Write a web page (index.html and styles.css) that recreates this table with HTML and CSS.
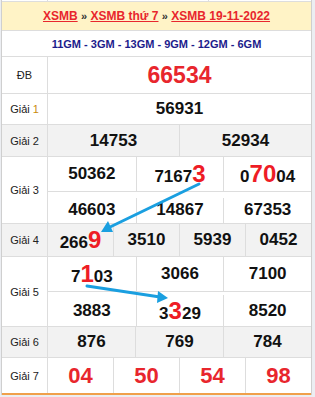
FILE: index.html
```html
<!DOCTYPE html>
<html lang="vi">
<head>
<meta charset="utf-8">
<link rel="stylesheet" href="styles.css">
</head>
<body>
<div class="page">
  <div class="prev">
    <div class="prev-a"></div><div class="prev-b"></div><div class="prev-c"></div>
  </div>
  <div class="title">
    <span><a href="#">XSMB</a> <span class="sep">»</span> <a href="#">XSMB thứ 7</a> <span class="sep">»</span> <a href="#">XSMB 19-11-2022</a></span>
  </div>
  <div class="codes">11GM - 3GM - 13GM - 9GM - 12GM - 6GM</div>

  <div class="row r-db">
    <div class="label">ĐB</div>
    <div class="vals"><div class="cell db">66534</div></div>
  </div>
  <div class="row r-g1">
    <div class="label"><span>Giải <span class="gold">1</span></span></div>
    <div class="vals"><div class="cell">56931</div></div>
  </div>
  <div class="row r-g2 grey">
    <div class="label">Giải 2</div>
    <div class="vals"><div class="cell">14753</div><div class="cell">52934</div></div>
  </div>
  <div class="row r-g3">
    <div class="label">Giải 3</div>
    <div class="vals grid3">
      <div class="cell c1">50362</div>
      <div class="cell c1"><span>7167<b class="hl">3</b></span></div>
      <div class="cell c1"><span>0<b class="hl">70</b>04</span></div>
      <div class="cell c2">46603</div><div class="cell c2">14867</div><div class="cell c2">67353</div>
    </div>
  </div>
  <div class="row r-g4 grey">
    <div class="label">Giải 4</div>
    <div class="vals"><div class="cell"><span>266<b class="hl">9</b></span></div><div class="cell">3510</div><div class="cell">5939</div><div class="cell">0452</div></div>
  </div>
  <div class="row r-g5">
    <div class="label">Giải 5</div>
    <div class="vals grid3">
      <div class="cell c1"><span>7<b class="hl">1</b>03</span></div><div class="cell c1">3066</div><div class="cell c1">7100</div>
      <div class="cell c2">3883</div><div class="cell c2"><span>3<b class="hl">3</b>29</span></div><div class="cell c2">8520</div>
    </div>
  </div>
  <div class="row r-g6 grey">
    <div class="label">Giải 6</div>
    <div class="vals"><div class="cell">876</div><div class="cell">769</div><div class="cell">784</div></div>
  </div>
  <div class="row r-g7">
    <div class="label">Giải 7</div>
    <div class="vals"><div class="cell red">04</div><div class="cell red">50</div><div class="cell red">54</div><div class="cell red">98</div></div>
  </div>

  <svg class="arrows" width="315" height="397" viewBox="0 0 315 397">
    <g stroke="#1a9fe0" stroke-width="3" stroke-linecap="round" fill="none">
      <line x1="199" y1="184" x2="108" y2="228"/>
      <line x1="87" y1="286" x2="160" y2="297"/>
    </g>
    <g fill="#1a9fe0">
      <polygon points="101,232 108,221 113,232"/>
      <polygon points="168,298 158,291 157,303"/>
    </g>
  </svg>
</div>
</body>
</html>
```
FILE: styles.css
```css
* { box-sizing: border-box; }
html, body { margin: 0; padding: 0; }
body {
  background: #eceef2;
  font-family: "Liberation Sans", Arial, sans-serif;
  width: 315px;
  height: 397px;
  overflow: hidden;
}
.page {
  position: relative;
  width: 311px;
  margin-left: 1px;
  background: #fff;
  border-left: 1px solid #cfcfcf;
  border-right: 1px solid #cfcfcf;
}
.prev {
  display: flex;
  height: 2px;
  border-bottom: 1px solid #ddd;
}
.prev-a { width: 46px; border-right: 1px solid #ddd; }
.prev-b { width: 161px; border-right: 1px solid #ddd; }
.prev-c { flex: 1; }
.title {
  height: 29px;
  background: #fff3c6;
  border-bottom: 1px solid #ddd;
  display: flex;
  align-items: center;
  justify-content: center;
  font-size: 12px;
  font-weight: bold;
}
.title a { color: #e8262d; text-decoration: underline; }
.title .sep { color: #333; font-size: 11px; }
.codes {
  height: 26px;
  border-bottom: 1px solid #ddd;
  display: flex;
  align-items: center;
  justify-content: center;
  font-size: 11px;
  font-weight: bold;
  color: #1c1c8c;
}
.row {
  display: flex;
  border-bottom: 1px solid #ddd;
}
.row.grey { background: #f2f2f2; }
.label {
  width: 46px;
  flex: none;
  border-right: 1px solid #ddd;
  display: flex;
  align-items: center;
  justify-content: center;
  font-size: 11px;
  color: #222;
}
.label .gold { color: #c98a0c; }
.vals {
  flex: 1;
  display: flex;
}
.cell {
  flex: 1;
  display: flex;
  align-items: center;
  justify-content: center;
  font-size: 17px;
  font-weight: bold;
  color: #111;
  border-left: 1px solid #ddd;
}
.cell:first-child { border-left: none; }
.grid3 {
  display: grid;
  grid-template-columns: 1fr 1fr 1fr;
}
.grid3 .cell:nth-child(3n+1) { border-left: none; }
.grid3 .c1 { border-bottom: 1px solid #ddd; }
.hl { color: #ee1c25; font-size: 24px; font-weight: bold; }
.db { color: #e8262d; font-size: 23px; }
.red { color: #e8262d; font-size: 22px; }
.r-db { height: 37px; }
.r-g1 { height: 31px; }
.r-g2 { height: 32px; }
.r-g3 { height: 67px; }
.r-g3 .c1 { height: 35px; }
.r-g4 { height: 33px; }
.r-g5 { height: 70px; }
.r-g5 .c1 { height: 35px; }
.r-g6 { height: 31px; }
.r-g7 { height: 37px; border-bottom: 2px solid #f0a04b; }
.arrows {
  position: absolute;
  left: -2px;
  top: 0;
  pointer-events: none;
}
```
